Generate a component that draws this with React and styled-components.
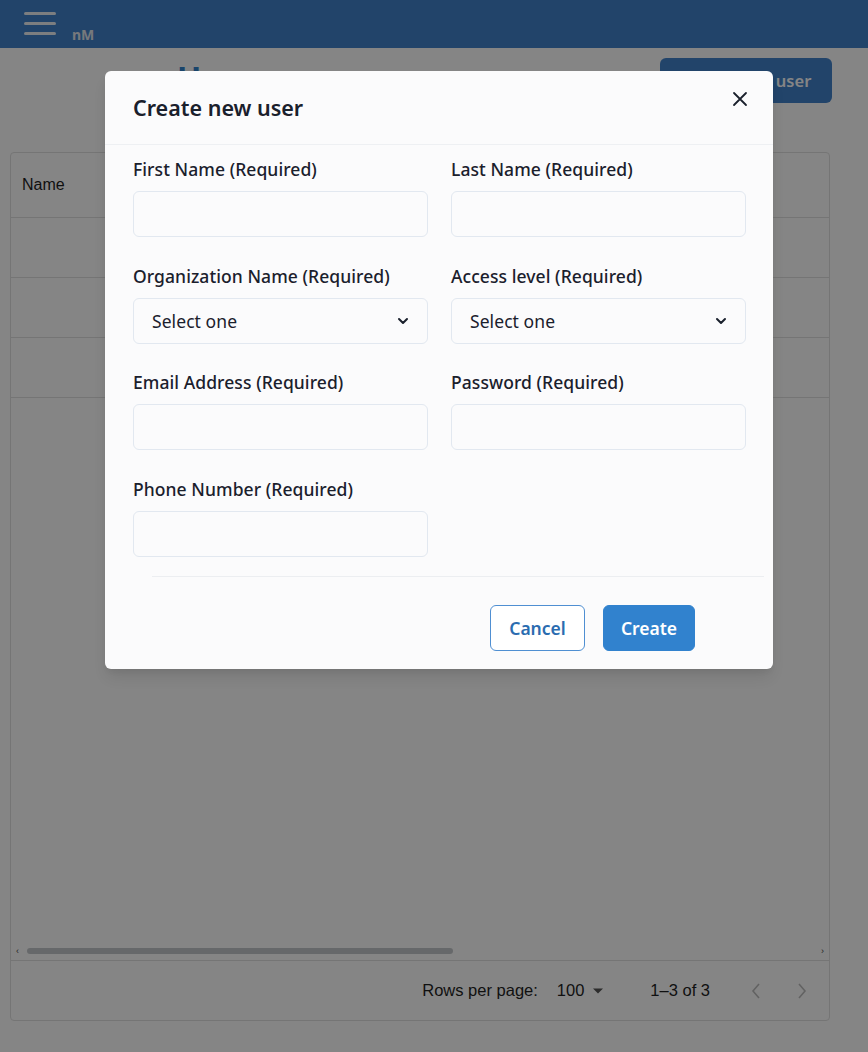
import React from "react";
import styled, { createGlobalStyle } from "styled-components";

const GlobalStyle = createGlobalStyle`
  html, body { margin: 0; padding: 0; }
  body { font-family: "Noto Sans", "Open Sans", sans-serif; background: #fff; }
  * { box-sizing: border-box; }
`;

const Page = styled.div`
  position: relative;
  height: 1052px;
  overflow: hidden;
  background: #ffffff;
`;

const TopBar = styled.header`
  height: 48px;
  background: #4183cc;
  display: flex;
  align-items: center;
  padding-left: 24px;
  gap: 16px;
`;

const Burger = styled.div`
  width: 32px;
  display: flex;
  flex-direction: column;
  gap: 7px;
  margin-top: -2px;
  span { display: block; height: 3px; border-radius: 2px; background: #eef2f6; }
`;

const Brand = styled.span`
  font-family: "Noto Sans", sans-serif;
  font-weight: 700;
  font-size: 14px;
  color: #e4e8ee;
  margin-top: 20px;
`;

const Main = styled.main`
  padding: 10px 38px 0 10px;
`;

const Toolbar = styled.div`
  display: flex;
  justify-content: space-between;
  align-items: flex-start;
  height: 94px;
`;

const Title = styled.h1`
  margin: 0 0 0 167px;
  padding-top: 0;
  font-size: 32px;
  font-weight: 700;
  color: #3182ce;
  line-height: 40px;
`;

const PrimaryTopButton = styled.button`
  margin-right: -2px;
  width: 172px;
  height: 45px;
  border: none;
  border-radius: 6px;
  background: #4183cc;
  color: #fff;
  font-family: "Noto Sans", sans-serif;
  font-size: 16.5px;
  font-weight: 600;
`;

const Table = styled.div`
  height: 869px;
  border: 1px solid #e0e0e0;
  border-radius: 4px;
  display: flex;
  flex-direction: column;
  font-family: "Liberation Sans", Arial, sans-serif;
  color: #1f1f1f;
`;

const HeaderRow = styled.div`
  height: 65px;
  display: flex;
  align-items: center;
  padding-left: 11px;
  font-size: 16px;
  border-bottom: 1px solid #e0e0e0;
`;

const Row = styled.div`
  height: 60px;
  border-bottom: 1px solid #e0e0e0;
  flex-shrink: 0;
`;

const Spacer = styled.div`
  flex: 1;
`;

const ScrollBar = styled.div`
  height: 10px;
  display: flex;
  align-items: center;
  padding: 0 5px;
  gap: 8px;
  margin-bottom: 4px;
  font-size: 9px;
  color: #444;
`;

const Thumb = styled.div`
  width: 426px;
  height: 6px;
  border-radius: 3px;
  background: #c4c8cc;
`;

const Arrow = styled.span`
  margin-left: ${(p) => (p.$push ? "auto" : "0")};
`;

const Footer = styled.div`
  height: 60px;
  border-top: 1px solid #e0e0e0;
  display: flex;
  align-items: center;
  justify-content: flex-end;
  font-size: 16.5px;
  padding-right: 21px;
`;

const FooterText = styled.span`
  margin-right: ${(p) => p.$mr || 0}px;
  color: #1f1f1f;
  display: inline-flex;
  align-items: center;
  gap: 9px;
`;

const PageArrow = styled.span`
  display: inline-flex;
  margin-right: ${(p) => p.$mr || 0}px;
`;

const Overlay = styled.div`
  position: absolute;
  inset: 0;
  background: rgba(0, 0, 0, 0.48);
  padding: 71px 0 0 105px;
`;

const Modal = styled.section`
  position: relative;
  width: 668px;
  background: #fbfbfc;
  border-radius: 6px;
  box-shadow: 0 10px 15px -3px rgba(0,0,0,0.1), 0 4px 6px -2px rgba(0,0,0,0.05);
  font-family: "Noto Sans", "Open Sans", sans-serif;
  color: #1a202c;
`;

const ModalHeader = styled.div`
  height: 74px;
  display: flex;
  align-items: center;
  padding: 0 28px;
  border-bottom: 1px solid #eef0f3;
`;

const ModalTitle = styled.h2`
  margin: 0;
  font-size: 21.5px;
  font-weight: 600;
`;

const CloseButton = styled.button`
  position: absolute;
  top: 12px;
  right: 17px;
  width: 32px;
  height: 32px;
  border: none;
  background: transparent;
  display: flex;
  align-items: center;
  justify-content: center;
  padding: 0;
  color: #1a202c;
`;

const Body = styled.div`
  padding: 12px 27px 0 28px;
  display: grid;
  grid-template-columns: 295px 295px;
  column-gap: 23px;
  row-gap: 26.5px;
`;

const Field = styled.div`
  display: flex;
  flex-direction: column;
`;

const Label = styled.label`
  font-size: 17.5px;
  line-height: 24px;
  font-weight: 500;
  margin-bottom: 10px;
  letter-spacing: 0.07px;
`;

const Input = styled.div`
  height: 46px;
  border: 1px solid #e2e8f0;
  border-radius: 6px;
  background: #fbfbfc;
  display: flex;
  align-items: center;
  justify-content: space-between;
  padding: 0 16px 0 18px;
  font-size: 17.5px;
  letter-spacing: 0.07px;
`;

const Divider = styled.hr`
  margin: 19px 9px 0 47px;
  border: none;
  border-top: 1px solid #eceef1;
`;

const ModalFooter = styled.div`
  display: flex;
  justify-content: flex-end;
  gap: 18px;
  padding: 28px 78px 18px 0;
`;

const Btn = styled.button`
  height: 46px;
  width: ${(p) => p.$w}px;
  border-radius: 6px;
  font-family: "Noto Sans", sans-serif;
  font-size: 17.5px;
  font-weight: 600;
  border: 1px solid ${(p) => (p.$primary ? "#3182ce" : "#4f8fd2")};
  background: ${(p) => (p.$primary ? "#3182ce" : "#ffffff")};
  color: ${(p) => (p.$primary ? "#ffffff" : "#2b6cb0")};
`;

const Chevron = () => (
  <svg width="16" height="16" viewBox="0 0 24 24" fill="none" stroke="#1a202c" strokeWidth="3" strokeLinecap="round" strokeLinejoin="round">
    <path d="M6 9l6 6 6-6" />
  </svg>
);

const fields = [
  { label: "First Name (Required)" },
  { label: "Last Name (Required)" },
  { label: "Organization Name (Required)", select: true },
  { label: "Access level (Required)", select: true },
  { label: "Email Address (Required)" },
  { label: "Password (Required)" },
  { label: "Phone Number (Required)" },
];

export default function App() {
  return (
    <Page>
      <GlobalStyle />
      <TopBar>
        <Burger><span /><span /><span /></Burger>
        <Brand>nM</Brand>
      </TopBar>
      <Main>
        <Toolbar>
          <Title>Users</Title>
          <PrimaryTopButton>Create new user</PrimaryTopButton>
        </Toolbar>
        <Table>
          <HeaderRow>Name</HeaderRow>
          <Row />
          <Row />
          <Row />
          <Spacer />
          <ScrollBar>
            <span>‹</span>
            <Thumb />
            <Arrow $push>›</Arrow>
          </ScrollBar>
          <Footer>
            <FooterText $mr={19}>Rows per page:</FooterText>
            <FooterText $mr={47}>100 <svg width="10" height="6" viewBox="0 0 10 5"><path d="M0 0h10L5 5z" fill="#555" /></svg></FooterText>
            <FooterText $mr={40}>1–3 of 3</FooterText>
            <PageArrow $mr={34}>
              <svg width="12" height="18" viewBox="0 0 12 18" fill="none" stroke="#bdbdbd" strokeWidth="1.6"><path d="M9 2L3 9l6 7" /></svg>
            </PageArrow>
            <PageArrow>
              <svg width="12" height="18" viewBox="0 0 12 18" fill="none" stroke="#bdbdbd" strokeWidth="1.6"><path d="M3 2l6 7-6 7" /></svg>
            </PageArrow>
          </Footer>
        </Table>
      </Main>
      <Overlay>
        <Modal>
          <ModalHeader>
            <ModalTitle>Create new user</ModalTitle>
          </ModalHeader>
          <CloseButton aria-label="Close">
            <svg width="16" height="16" viewBox="0 0 16 16" fill="none" stroke="#1a202c" strokeWidth="1.8" strokeLinecap="round">
              <path d="M2 2l12 12M14 2L2 14" />
            </svg>
          </CloseButton>
          <Body>
            {fields.map((f) => (
              <Field key={f.label}>
                <Label>{f.label}</Label>
                <Input>
                  {f.select && (<><span>Select one</span><Chevron /></>)}
                </Input>
              </Field>
            ))}
          </Body>
          <Divider />
          <ModalFooter>
            <Btn $w={95}>Cancel</Btn>
            <Btn $primary $w={92}>Create</Btn>
          </ModalFooter>
        </Modal>
      </Overlay>
    </Page>
  );
}
